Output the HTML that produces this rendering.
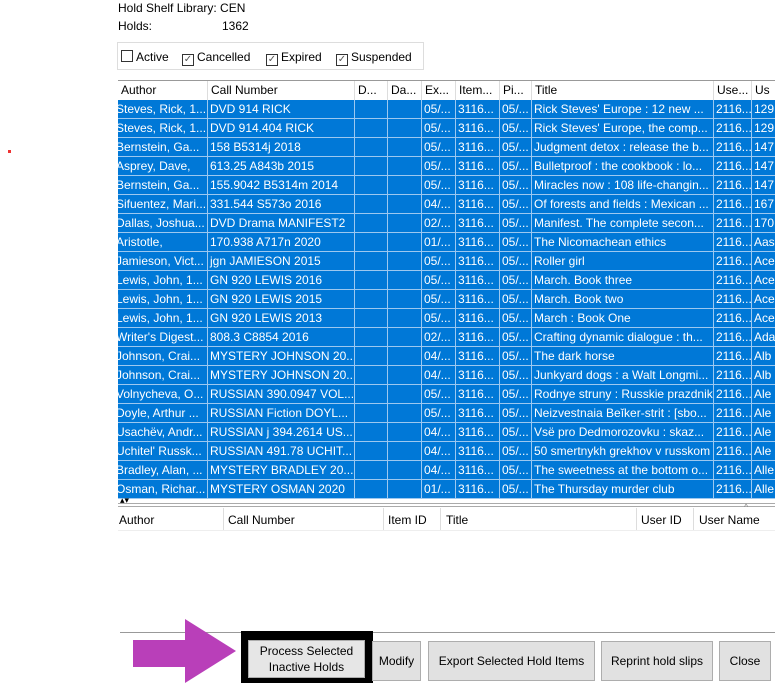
<!DOCTYPE html>
<html><head><style>
body{margin:0;width:775px;height:683px;background:#fff;font-family:"Liberation Sans",Arial,sans-serif;font-size:12px;color:#000;position:relative;overflow:hidden}
.a{position:absolute;white-space:nowrap}
.tbl{position:absolute;left:118px;top:80px;width:657px;height:418px;overflow:hidden;border-top:1px solid #999}
.hd{position:absolute;top:0;height:19px;line-height:19px;border-right:1px solid #ddd;padding-left:3px;box-sizing:border-box;overflow:hidden;white-space:nowrap}
.row{position:absolute;left:0;width:700px;height:19px;background:#0078d7;color:#fff}
.c{position:absolute;top:0;height:19px;line-height:18px;border-right:1px solid #9cc8f0;border-bottom:1px solid #9cc8f0;box-sizing:border-box;overflow:hidden;white-space:nowrap;padding-left:2px}
.btn{position:absolute;background:#e1e1e1;border:1px solid #adadad;box-sizing:border-box;text-align:center;font-size:12px;color:#000;display:flex;align-items:center;justify-content:center;line-height:16px}
.cb{display:inline-block;width:10px;height:10px;border:1px solid #333;vertical-align:-1px;margin-right:3px;position:relative;background:#fff;font-size:10px;line-height:10px;text-align:center;color:#555}
</style></head><body>
<div class="a" style="left:118px;top:1px">Hold Shelf Library: CEN</div>
<div class="a" style="left:118px;top:19px">Holds:</div>
<div class="a" style="left:222px;top:19px">1362</div>
<div class="a" style="left:117px;top:42px;width:307px;height:28px;border:1px solid #ddd;box-sizing:border-box"></div>
<div class="a" style="left:121px;top:50px"><span class="cb"></span>Active</div>
<div class="a" style="left:182px;top:50px"><span class="cb">✓</span>Cancelled</div>
<div class="a" style="left:266px;top:50px"><span class="cb">✓</span>Expired</div>
<div class="a" style="left:336px;top:50px"><span class="cb">✓</span>Suspended</div>
<div class="a" style="left:8px;top:150px;width:3px;height:3px;background:#e33"></div>
<div class="tbl" id="t"></div>
<div class="a" style="left:120px;top:496px;font-size:9px;line-height:8px">▴▾</div>
<div class="a" style="left:118px;top:503px;width:657px;height:2px;border-top:1px solid #aaa;border-bottom:1px solid #aaa"></div>
<div class="a" style="left:118px;top:508px;width:657px;height:22px;border-bottom:1px solid #eee"></div>
<div class="a" style="left:119px;top:513px">Author</div>
<div class="a" style="left:223px;top:508px;height:22px;border-left:1px solid #ddd"></div>
<div class="a" style="left:228px;top:513px">Call Number</div>
<div class="a" style="left:383px;top:508px;height:22px;border-left:1px solid #ddd"></div>
<div class="a" style="left:388px;top:513px">Item ID</div>
<div class="a" style="left:440px;top:508px;height:22px;border-left:1px solid #ddd"></div>
<div class="a" style="left:446px;top:513px">Title</div>
<div class="a" style="left:636px;top:508px;height:22px;border-left:1px solid #ddd"></div>
<div class="a" style="left:641px;top:513px">User ID</div>
<div class="a" style="left:693px;top:508px;height:22px;border-left:1px solid #ddd"></div>
<div class="a" style="left:699px;top:513px">User Name</div>
<div class="a" style="left:744px;top:502px;font-size:9px;color:#888">^</div>
<div class="a" style="left:120px;top:632px;width:655px;height:1px;background:#999"></div>
<svg class="a" style="left:133px;top:619px" width="104" height="64"><polygon points="0,21 52,21 52,0 103,32 52,64 52,48 0,48" fill="#b93fb9"/></svg>
<div class="a" style="left:241px;top:631px;width:132px;height:52px;background:#000"></div>
<div class="btn" style="left:248px;top:640px;width:117px;height:38px;background:#e6e6e6">Process Selected<br>Inactive Holds</div>
<div class="btn" style="left:372px;top:641px;width:49px;height:40px">Modify</div>
<div class="btn" style="left:428px;top:641px;width:167px;height:40px">Export Selected Hold Items</div>
<div class="btn" style="left:601px;top:641px;width:112px;height:40px">Reprint hold slips</div>
<div class="btn" style="left:719px;top:641px;width:52px;height:40px">Close</div>
<script>
var cols=[[-4,94],[90,147],[237,33],[270,34],[304,34],[338,44],[382,32],[414,182],[596,38],[634,40]];
var hd=["Author","Call Number","D...","Da...","Ex...","Item...","Pi...","Title","Use...","Us"];
var data=[
["Steves, Rick, 1...","DVD 914 RICK","05/...","Rick Steves' Europe : 12 new ...","129"],
["Steves, Rick, 1...","DVD 914.404 RICK","05/...","Rick Steves' Europe, the comp...","129"],
["Bernstein, Ga...","158 B5314j 2018","05/...","Judgment detox : release the b...","147"],
["Asprey, Dave,","613.25 A843b 2015","05/...","Bulletproof : the cookbook : lo...","147"],
["Bernstein, Ga...","155.9042 B5314m 2014","05/...","Miracles now : 108 life-changin...","147"],
["Sifuentez, Mari...","331.544 S573o 2016","04/...","Of forests and fields : Mexican ...","167"],
["Dallas, Joshua...","DVD Drama MANIFEST2","02/...","Manifest. The complete secon...","170"],
["Aristotle,","170.938 A717n 2020","01/...","The Nicomachean ethics","Aas"],
["Jamieson, Vict...","jgn JAMIESON 2015","05/...","Roller girl","Ace"],
["Lewis, John, 1...","GN 920 LEWIS 2016","05/...","March. Book three","Ace"],
["Lewis, John, 1...","GN 920 LEWIS 2015","05/...","March. Book two","Ace"],
["Lewis, John, 1...","GN 920 LEWIS 2013","05/...","March : Book One","Ace"],
["Writer's Digest...","808.3 C8854 2016","02/...","Crafting dynamic dialogue : th...","Ada"],
["Johnson, Crai...","MYSTERY JOHNSON 20...","04/...","The dark horse","Alb"],
["Johnson, Crai...","MYSTERY JOHNSON 20...","04/...","Junkyard dogs : a Walt Longmi...","Alb"],
["Volnycheva, O...","RUSSIAN 390.0947 VOL...","05/...","Rodnye struny : Russkie prazdnik","Ale"],
["Doyle, Arthur ...","RUSSIAN Fiction DOYL...","05/...","Neizvestnaia Beĭker-strit : [sbo...","Ale"],
["Usachëv, Andr...","RUSSIAN j 394.2614 US...","04/...","Vsë pro Dedmorozovku : skaz...","Ale"],
["Uchitel' Russk...","RUSSIAN 491.78 UCHIT...","04/...","50 smertnykh grekhov v russkom","Ale"],
["Bradley, Alan, ...","MYSTERY BRADLEY 20...","04/...","The sweetness at the bottom o...","Alle"],
["Osman, Richar...","MYSTERY OSMAN 2020","01/...","The Thursday murder club","Alle"]];
var h="";
for(var i=0;i<cols.length;i++){var l=i==0?0:cols[i][0],w=i==0?90:cols[i][1];h+='<div class="hd" style="left:'+l+'px;width:'+w+'px">'+hd[i]+'</div>';}
for(var r=0;r<data.length;r++){var d=data[r];var v=[d[0],d[1],"","",d[2],"3116...","05/...",d[3],"2116...",d[4]];
h+='<div class="row" style="top:'+(19+r*19)+'px">';
for(var i=0;i<cols.length;i++)h+='<div class="c" style="left:'+cols[i][0]+'px;width:'+cols[i][1]+'px">'+v[i]+'</div>';
h+='</div>';}
document.getElementById("t").innerHTML=h;
</script>
</body></html>
